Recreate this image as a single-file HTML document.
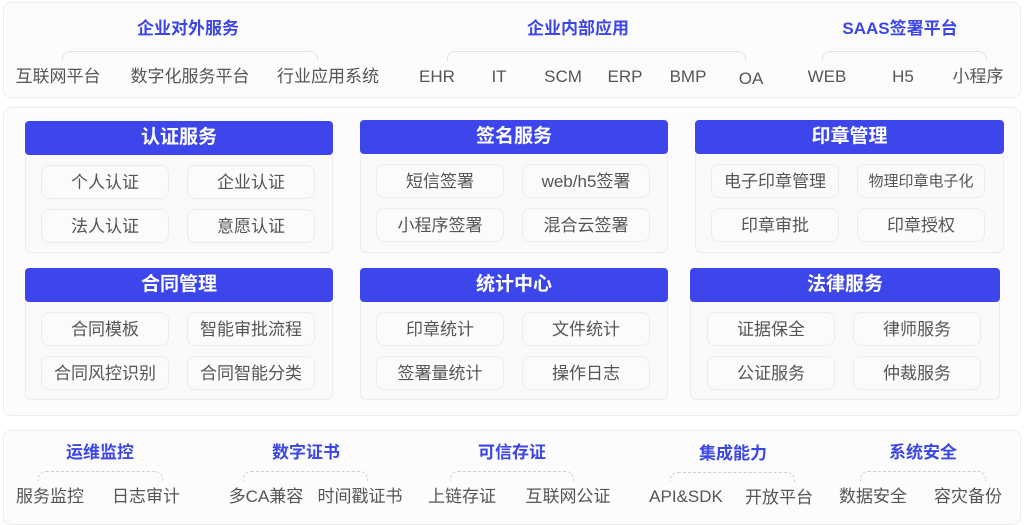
<!DOCTYPE html>
<html><head><meta charset="utf-8"><style>
*{margin:0;padding:0;box-sizing:border-box}
body{width:1024px;height:518px;background:#fff;position:relative;overflow:hidden;font-family:"Liberation Sans","Noto Sans CJK SC",sans-serif;color:#555}
.p{position:absolute;border:1px solid #ececec;border-radius:8px;background:#fcfcfc}
.t{position:absolute;transform:translateX(-50%);white-space:nowrap;line-height:1}
.tt{color:#3c46e6;font-weight:bold;font-size:17px}
.it{font-size:17px;color:#555}
.br{position:absolute;height:10px;border:1.5px solid #e2e2e2;border-bottom:none;border-radius:8px 8px 0 0}
.bd{position:absolute;height:10px;border:1.5px dashed #d0d0d0;border-bottom:none;border-radius:8px 8px 0 0}
.card{position:absolute;border:1px solid #ececec;border-radius:6px;background:#fafafa}
.hd{position:absolute;height:34px;background:#3c46ea;border-radius:4px;color:#fff;font-weight:bold;font-size:19px;text-align:center;line-height:34px}
.b{position:absolute;width:128px;height:34px;border:1px solid #ececec;border-radius:8px;background:#fbfbfb;text-align:center;line-height:33px;font-size:17px;color:#555}
</style></head><body>
<div class="p" style="left:3px;top:2px;width:1018px;height:96px"></div>
<div class="p" style="left:3px;top:107px;width:1018px;height:309px"></div>
<div class="p" style="left:3px;top:430px;width:1018px;height:95px"></div>

<div class="t tt" style="left:188px;top:20px">企业对外服务</div>
<div class="t tt" style="left:578px;top:20px">企业内部应用</div>
<div class="t tt" style="left:900px;top:20px">SAAS签署平台</div>
<div class="br" style="left:62px;top:51px;width:256px"></div>
<div class="br" style="left:447px;top:51px;width:299px"></div>
<div class="br" style="left:822px;top:51px;width:165px"></div>
<div class="t it" style="left:58px;top:68px">互联网平台</div>
<div class="t it" style="left:190px;top:68px">数字化服务平台</div>
<div class="t it" style="left:328px;top:68px">行业应用系统</div>
<div class="t it" style="left:437px;top:68px">EHR</div>
<div class="t it" style="left:499px;top:68px">IT</div>
<div class="t it" style="left:563px;top:68px">SCM</div>
<div class="t it" style="left:625px;top:68px">ERP</div>
<div class="t it" style="left:688px;top:68px">BMP</div>
<div class="t it" style="left:751px;top:70px">OA</div>
<div class="t it" style="left:827px;top:68px">WEB</div>
<div class="t it" style="left:903px;top:68px">H5</div>
<div class="t it" style="left:978px;top:68px">小程序</div>

<!-- row 1 cards -->
<div class="card" style="left:25px;top:121px;width:308px;height:132px"></div>
<div class="hd" style="left:25px;top:121px;width:308px">认证服务</div>
<div class="b" style="left:41px;top:165px">个人认证</div><div class="b" style="left:187px;top:165px">企业认证</div>
<div class="b" style="left:41px;top:209px">法人认证</div><div class="b" style="left:187px;top:209px">意愿认证</div>

<div class="card" style="left:360px;top:120px;width:308px;height:133px"></div>
<div class="hd" style="left:360px;top:120px;width:308px">签名服务</div>
<div class="b" style="left:376px;top:164px">短信签署</div><div class="b" style="left:522px;top:164px">web/h5签署</div>
<div class="b" style="left:376px;top:208px">小程序签署</div><div class="b" style="left:522px;top:208px">混合云签署</div>

<div class="card" style="left:695px;top:120px;width:309px;height:133px"></div>
<div class="hd" style="left:695px;top:120px;width:309px">印章管理</div>
<div class="b" style="left:711px;top:164px">电子印章管理</div><div class="b" style="left:857px;top:164px;font-size:15px">物理印章电子化</div>
<div class="b" style="left:711px;top:208px">印章审批</div><div class="b" style="left:857px;top:208px">印章授权</div>

<!-- row 2 cards -->
<div class="card" style="left:25px;top:268px;width:308px;height:132px"></div>
<div class="hd" style="left:25px;top:268px;width:308px">合同管理</div>
<div class="b" style="left:41px;top:312px">合同模板</div><div class="b" style="left:187px;top:312px">智能审批流程</div>
<div class="b" style="left:41px;top:356px">合同风控识别</div><div class="b" style="left:187px;top:356px">合同智能分类</div>

<div class="card" style="left:360px;top:268px;width:308px;height:132px"></div>
<div class="hd" style="left:360px;top:268px;width:308px">统计中心</div>
<div class="b" style="left:376px;top:312px">印章统计</div><div class="b" style="left:522px;top:312px">文件统计</div>
<div class="b" style="left:376px;top:356px">签署量统计</div><div class="b" style="left:522px;top:356px">操作日志</div>

<div class="card" style="left:690px;top:268px;width:310px;height:132px"></div>
<div class="hd" style="left:690px;top:268px;width:310px">法律服务</div>
<div class="b" style="left:707px;top:312px">证据保全</div><div class="b" style="left:853px;top:312px">律师服务</div>
<div class="b" style="left:707px;top:356px">公证服务</div><div class="b" style="left:853px;top:356px">仲裁服务</div>

<!-- bottom -->
<div class="t tt" style="left:100px;top:444px">运维监控</div>
<div class="t tt" style="left:306px;top:444px">数字证书</div>
<div class="t tt" style="left:512px;top:444px">可信存证</div>
<div class="t tt" style="left:733px;top:445px">集成能力</div>
<div class="t tt" style="left:923px;top:444px">系统安全</div>
<div class="bd" style="left:38px;top:471px;width:125px"></div>
<div class="bd" style="left:243px;top:471px;width:125px"></div>
<div class="bd" style="left:450px;top:471px;width:124px"></div>
<div class="bd" style="left:670px;top:472px;width:125px"></div>
<div class="bd" style="left:860px;top:471px;width:126px"></div>
<div class="t it" style="left:50px;top:488px">服务监控</div>
<div class="t it" style="left:146px;top:488px">日志审计</div>
<div class="t it" style="left:266px;top:488px">多CA兼容</div>
<div class="t it" style="left:360px;top:488px">时间戳证书</div>
<div class="t it" style="left:462px;top:488px">上链存证</div>
<div class="t it" style="left:568px;top:488px">互联网公证</div>
<div class="t it" style="left:686px;top:488px">API&amp;SDK</div>
<div class="t it" style="left:779px;top:489px">开放平台</div>
<div class="t it" style="left:873px;top:488px">数据安全</div>
<div class="t it" style="left:968px;top:488px">容灾备份</div>
</body></html>
